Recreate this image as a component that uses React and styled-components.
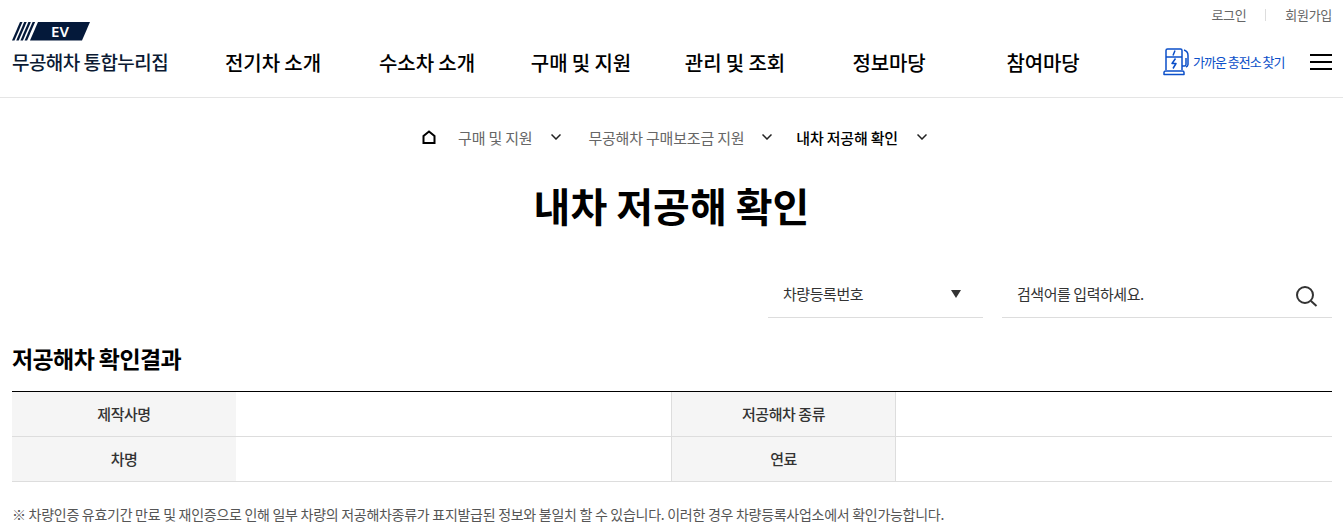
import React from "react";
import styled, { createGlobalStyle } from "styled-components";

const Global = createGlobalStyle`
  html, body { margin: 0; padding: 0; background: #fff; }
  body { font-family: "Noto Sans CJK KR", "Noto Sans", sans-serif; color: #111; overflow: hidden; }
  * { box-sizing: border-box; }
`;

const Header = styled.header`
  height: 98px;
  border-bottom: 1px solid #e5e5e5;
  padding: 0 11px 0 12px;
  display: flex;
  flex-direction: column;
`;
const UtilBar = styled.div`
  height: 22px;
  padding-top: 8px;
  display: flex;
  justify-content: flex-end;
  align-items: center;
  gap: 19px;
`;
const UtilLink = styled.a`
  font-size: 13px;
  line-height: 18px;
  letter-spacing: -0.3px;
  color: #666;
`;
const UtilDivider = styled.span`
  width: 1px;
  height: 12px;
  background: #ddd;
`;
const MainBar = styled.div`
  display: flex;
  align-items: flex-start;
`;
const Brand = styled.div`
  width: 184px;
  flex: none;
  display: flex;
  flex-direction: column;
  gap: 8px;
`;
const BrandName = styled.span`
  font-size: 19px;
  line-height: 26px;
  font-weight: 500;
  letter-spacing: -0.55px;
  color: #0b1a33;
  white-space: nowrap;
`;
const Nav = styled.nav`
  display: flex;
  flex: none;
  padding-top: 28px;
`;
const NavItem = styled.a`
  width: 154px;
  flex: none;
  font-size: 20px;
  line-height: 26px;
  font-weight: 500;
  letter-spacing: -0.1px;
  color: #000;
  white-space: nowrap;
  text-align: center;
`;
const Tools = styled.div`
  flex: 1;
  padding: 26px 0 0 43px;
  display: flex;
  align-items: center;
  justify-content: space-between;
`;
const ChargerLink = styled.a`
  display: flex;
  align-items: center;
  font-size: 13px;
  letter-spacing: -1px;
  line-height: 24px;
  color: #0b4fc9;
  white-space: nowrap;
`;
const Burger = styled.span`
  width: 22px;
  height: 16px;
  border-top: 2px solid #000;
  border-bottom: 2px solid #000;
  display: flex;
  align-items: center;
  &::before { content: ""; width: 100%; height: 2px; background: #000; }
`;

const Crumbs = styled.div`
  height: 40px;
  margin-top: 19px;
  display: flex;
  justify-content: center;
  align-items: center;
  padding-left: 6px;
`;
const Crumb = styled.span`
  display: flex;
  align-items: center;
  margin-left: ${(p) => p.$ml}px;
  font-size: 15px;
  letter-spacing: -0.2px;
  font-weight: ${(p) => (p.$active ? 500 : 400)};
  color: ${(p) => (p.$active ? "#000" : "#666")};
  white-space: nowrap;
`;
const Chevron = styled.svg`
  margin-left: ${(p) => p.$ml}px;
  width: 10px;
  height: 6px;
`;
const Title = styled.h1`
  margin: 18px 0 0;
  text-align: center;
  font-size: 40px;
  line-height: 60px;
  font-weight: 700;
  color: #000;
`;
const SearchRow = styled.div`
  margin-top: 35px;
  padding: 0 11px 0 12px;
  display: flex;
  justify-content: flex-end;
  gap: 19px;
`;
const SelectBox = styled.div`
  width: 215px;
  height: 48px;
  border-bottom: 1px solid #ddd;
  padding: 0 22px 0 15px;
  display: flex;
  align-items: center;
  justify-content: space-between;
  font-size: 15px;
  letter-spacing: -0.45px;
  color: #333;
`;
const Caret = styled.span`
  width: 0;
  height: 0;
  border-left: 5px solid transparent;
  border-right: 5px solid transparent;
  border-top: 8px solid #333;
`;
const SearchBox = styled.div`
  width: 330px;
  height: 48px;
  border-bottom: 1px solid #ddd;
  padding: 0 14px 0 15px;
  display: flex;
  align-items: center;
  justify-content: space-between;
  font-size: 15px;
  letter-spacing: -0.45px;
  color: #333;
`;
const SearchGlyph = styled.svg`
  width: 23px;
  height: 23px;
  margin-top: 6px;
`;
const Section = styled.section`
  padding: 0 11px 0 12px;
`;
const SectionTitle = styled.h2`
  margin: 22px 0 0;
  font-size: 23px;
  line-height: 36px;
  font-weight: 700;
  letter-spacing: -0.6px;
  color: #000;
`;
const Table = styled.div`
  margin-top: 15px;
  border-top: 1px solid #000;
  display: grid;
  grid-template-columns: 224px 435px 224px 1fr;
`;
const Th = styled.div`
  height: 45px;
  padding-bottom: 2px;
  background: #f5f5f5;
  border-bottom: 1px solid #ddd;
  border-left: ${(p) => (p.$line ? "1px solid #ddd" : "0")};
  display: flex;
  align-items: center;
  justify-content: center;
  font-size: 15px;
  letter-spacing: -0.45px;
  font-weight: 500;
  color: #333;
`;
const Td = styled.div`
  height: 45px;
  border-bottom: 1px solid #ddd;
  border-left: ${(p) => (p.$line ? "1px solid #ddd" : "0")};
`;
const Note = styled.p`
  margin: 22px 0 0;
  font-size: 14px;
  line-height: 20px;
  letter-spacing: -0.28px;
  color: #555;
  white-space: nowrap;
`;

const LogoMark = () => (
  <svg width="78" height="19" viewBox="0 0 78 19" style={{ display: "block" }}>
    <polygon points="0,18.500 8,0 10.500,0 2.500,18.500" fill="#04193a" />
    <polygon points="4.200,18.500 12.200,0 14.700,0 6.700,18.500" fill="#04193a" />
    <polygon points="8.400,18.500 16.400,0 18.900,0 10.900,18.500" fill="#04193a" />
    <polygon points="12.600,18.500 20.600,0 23.100,0 15.100,18.500" fill="#04193a" />
    <polygon points="18,18.500 26,0 78,0 70,18.500" fill="#04193a" />
    <text x="48" y="15" textAnchor="middle" fontSize="15" fontWeight="600" fill="#fff" fontFamily="Noto Sans, sans-serif">EV</text>
  </svg>
);

const ChargerIcon = () => (
  <svg width="30" height="28" viewBox="0 0 30 28" fill="none" stroke="#0b4fc9" strokeWidth="1.500" strokeLinejoin="round">
    <path d="M3 22V2.500A1.500 1.500 0 0 1 4.500 1h13A1.500 1.500 0 0 1 19 2.500V22" />
    <path d="M3 9h16" />
    <path d="M12 2.500l-2 5M12.500 10.500l-3.500 5h4l-3 5" />
    <path d="M1 26.500V24.500A1.500 1.500 0 0 1 2.500 23h17a1.500 1.500 0 0 1 1.500 1.500v2z" />
    <path d="M19 18h2.500a1.500 1.500 0 0 0 1.500-1.500V10" />
    <path d="M21 2c2.500.8 4 3 4 5.500v9a3 3 0 0 1-2 2.500" />
  </svg>
);

const HomeIcon = () => (
  <svg width="14" height="14" viewBox="0 0 14 14" fill="none" stroke="#000" strokeWidth="2" style={{ display: "block" }}>
    <path d="M1.500 13V6L7 1.500 12.500 6v7z" />
  </svg>
);

const ChevronDown = ({ ml }) => (
  <Chevron $ml={ml} viewBox="0 0 10 6" fill="none" stroke="#222" strokeWidth="1.500">
    <path d="M0.500 0.500 5 5 9.500 0.500" />
  </Chevron>
);

const SearchIcon = () => (
  <SearchGlyph viewBox="0 0 23 23" fill="none" stroke="#333" strokeWidth="2">
    <circle cx="10" cy="10" r="8" />
    <path d="M16 16 21.500 21" />
  </SearchGlyph>
);

const navItems = ["전기차 소개", "수소차 소개", "구매 및 지원", "관리 및 조회", "정보마당", "참여마당"];

export default function App() {
  return (
    <>
      <Global />
      <Header>
        <UtilBar>
          <UtilLink>로그인</UtilLink>
          <UtilDivider />
          <UtilLink>회원가입</UtilLink>
        </UtilBar>
        <MainBar>
          <Brand>
            <LogoMark />
            <BrandName>무공해차 통합누리집</BrandName>
          </Brand>
          <Nav>
            {navItems.map((t) => <NavItem key={t}>{t}</NavItem>)}
          </Nav>
          <Tools>
            <ChargerLink><ChargerIcon />가까운 충전소 찾기</ChargerLink>
            <Burger />
          </Tools>
        </MainBar>
      </Header>
      <main>
        <Crumbs>
          <HomeIcon />
          <Crumb $ml={22}>구매 및 지원</Crumb>
          <ChevronDown ml={19} />
          <Crumb $ml={27}>무공해차 구매보조금 지원</Crumb>
          <ChevronDown ml={18} />
          <Crumb $ml={24} $active>내차 저공해 확인</Crumb>
          <ChevronDown ml={19} />
        </Crumbs>
        <Title>내차 저공해 확인</Title>
        <SearchRow>
          <SelectBox>차량등록번호<Caret /></SelectBox>
          <SearchBox>검색어를 입력하세요.<SearchIcon /></SearchBox>
        </SearchRow>
        <Section>
          <SectionTitle>저공해차 확인결과</SectionTitle>
          <Table>
            <Th>제작사명</Th><Td />
            <Th $line>저공해차 종류</Th><Td $line />
            <Th>차명</Th><Td />
            <Th $line>연료</Th><Td $line />
          </Table>
          <Note>※ 차량인증 유효기간 만료 및 재인증으로 인해 일부 차량의 저공해차종류가 표지발급된 정보와 불일치 할 수 있습니다. 이러한 경우 차량등록사업소에서 확인가능합니다.</Note>
        </Section>
      </main>
    </>
  );
}
